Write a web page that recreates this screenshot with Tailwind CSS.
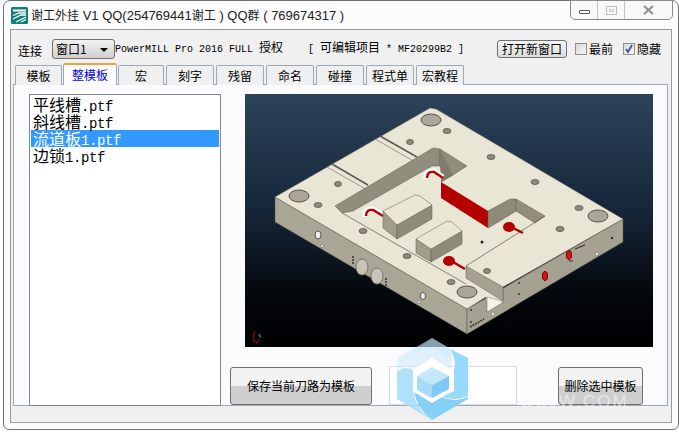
<!DOCTYPE html>
<html>
<head>
<meta charset="UTF-8">
<script src="https://cdn.jsdelivr.net/npm/@tailwindcss/browser@4"></script>
</head>
<body class="bg-white">
<div class="w-[679px] h-[433px] bg-white overflow-hidden relative font-['Noto_Sans_CJK_SC',sans-serif] text-black">
  <!-- window frame -->
  <div class="ml-[3px] w-[676px] h-[430px] bg-[#fbfbfc] border border-[#707070] rounded-t-[7px] rounded-b-[6px] pl-[6px] pr-[5px] flex flex-col relative">
    <!-- title bar -->
    <div class="h-[28px] flex items-center shrink-0">
      <svg class="w-[17px] h-[17px] ml-[1px]" viewBox="0 0 17 17">
        <rect x="0" y="0" width="17" height="17" rx="1.5" fill="#0f8078"/>
        <rect x="2" y="2.5" width="13" height="2" fill="#fff"/>
        <path d="M2 8.5l6-2.5h7M2 12l8-4h5M5 15l10-5M10 15l5-2.5" stroke="#fff" stroke-width="1.3" fill="none"/>
      </svg>
      <span class="ml-[3px] text-[13px] leading-none whitespace-nowrap text-[#222] font-['Liberation_Sans','Noto_Sans_CJK_SC',sans-serif]"><span class="text-[12px]">谢工外挂</span> V1 QQ(254769441<span class="text-[12px]">谢工</span> ) QQ<span class="text-[12px]">群</span> ( 769674317 )</span>
    </div>
    <!-- window buttons -->
    <div class="absolute top-[-1px] right-[5px] w-[103px] h-[20px] bg-[#f8f8f9] border border-[#8a8a8a] rounded-b-[5px] flex">
      <div class="w-[27px] border-r border-[#c4c4c4] flex items-center justify-center">
        <div class="w-[11px] h-[4px] mt-[4px] border border-[#555] bg-white rounded-[1px]"></div>
      </div>
      <div class="w-[27px] border-r border-[#c4c4c4] flex items-center justify-center">
        <div class="w-[11px] h-[9px] border border-[#b9bcc0] flex items-center justify-center"><div class="w-[5px] h-[3px] border border-[#c8cacd]"></div></div>
      </div>
      <div class="flex-1 flex items-center justify-center">
        <svg class="w-[11px] h-[10px]" viewBox="0 0 11 10"><path d="M1 1l9 8M10 1L1 9" stroke="#8d8f92" stroke-width="2.2" fill="none"/></svg>
      </div>
    </div>
    <!-- client area -->
    <div class="w-[662px] h-[394px] bg-[#f0f0f0] border border-[#9a9a9a] border-b-[#a0a0a0] flex flex-col shrink-0">
      <!-- top row -->
      <div class="h-[34px] flex items-center text-[12px] whitespace-nowrap pt-[4px] shrink-0">
        <span class="ml-[7px] w-[34px] mt-[3px]">连接</span>
        <div class="w-[63px] h-[20px] border border-[#707070] rounded-[3px] bg-gradient-to-b from-[#f2f2f2] to-[#cfcfcf] flex items-center pl-[3px] relative">
          窗口1
          <span class="absolute right-[6px] top-[8px] w-0 h-0 border-l-[4px] border-r-[4px] border-t-[4px] border-l-transparent border-r-transparent border-t-black"></span>
        </div>
        <span class="w-[193px] text-[10px] font-['Liberation_Mono','Noto_Sans_CJK_SC',monospace]">PowerMILL Pro 2016 FULL <span class="text-[12px]">授权</span></span>
        <span class="w-[189px] text-[10px] font-['Liberation_Mono','Noto_Sans_CJK_SC',monospace]">[ <span class="text-[12px]">可编辑项目</span> * MF20299B2 ]</span>
        <div class="w-[70px] h-[18px] border border-[#707070] rounded-[3px] bg-gradient-to-b from-[#f5f5f5] to-[#dcdcdc] flex items-center justify-center">打开新窗口</div>
        <div class="ml-[8px] w-[12px] h-[12px] border border-[#8e8f8f] bg-gradient-to-br from-[#d8d8d8] to-[#f8f8f8]"></div>
        <span class="ml-[2px] w-[34px]">最前</span>
        <div class="w-[12px] h-[12px] border border-[#8e8f8f] bg-gradient-to-br from-[#d8d8d8] to-[#f8f8f8] flex items-center justify-center">
          <svg class="w-[10px] h-[10px]" viewBox="0 0 10 10"><path d="M2 5l2 3 4-7" stroke="#3d5a96" stroke-width="1.8" fill="none"/></svg>
        </div>
        <span class="ml-[2px]">隐藏</span>
      </div>
      <!-- tabs -->
      <div class="h-[21px] ml-[4px] flex items-end gap-[2px] text-[12px] shrink-0 relative z-10 -mb-px">
        <div class="w-[47px] h-[20px] bg-[#f0f0f0] border border-[#9caab6] border-b-0 rounded-t-[2px] flex items-center justify-center">模板</div>
        <div class="w-[54px] h-[22px] -mx-px bg-[#fbfbfd] border border-[#9caab6] border-b-0 border-t-2 border-t-[#e8a33d] rounded-t-[2px] flex items-center justify-center text-[#0000e0]">整模板</div>
        <div class="w-[46px] h-[20px] bg-[#f0f0f0] border border-[#9caab6] border-b-0 rounded-t-[2px] flex items-center justify-center">宏</div>
        <div class="w-[48px] h-[20px] bg-[#f0f0f0] border border-[#9caab6] border-b-0 rounded-t-[2px] flex items-center justify-center">刻字</div>
        <div class="w-[48px] h-[20px] bg-[#f0f0f0] border border-[#9caab6] border-b-0 rounded-t-[2px] flex items-center justify-center">残留</div>
        <div class="w-[48px] h-[20px] bg-[#f0f0f0] border border-[#9caab6] border-b-0 rounded-t-[2px] flex items-center justify-center">命名</div>
        <div class="w-[48px] h-[20px] bg-[#f0f0f0] border border-[#9caab6] border-b-0 rounded-t-[2px] flex items-center justify-center">碰撞</div>
        <div class="w-[48px] h-[20px] bg-[#f0f0f0] border border-[#9caab6] border-b-0 rounded-t-[2px] flex items-center justify-center">程式单</div>
        <div class="w-[48px] h-[20px] bg-[#f0f0f0] border border-[#9caab6] border-b-0 rounded-t-[2px] flex items-center justify-center">宏教程</div>
      </div>
      <!-- tab page -->
      <div class="ml-[2px] w-[655px] h-[322px] bg-[#fbfbfd] border border-[#9caab6] flex pt-[9px] pl-[15px] shrink-0">
        <!-- list -->
        <div class="w-[192px] h-[312px] bg-white border border-[#828790] pt-[1px] px-[1px] text-[16px] leading-[17px] shrink-0">
          <div class="h-[17px] pl-[2px]">平线槽<span class="font-['Liberation_Mono',monospace] text-[14px] tracking-[-0.4px]">.ptf</span></div>
          <div class="h-[17px] pl-[2px]">斜线槽<span class="font-['Liberation_Mono',monospace] text-[14px] tracking-[-0.4px]">.ptf</span></div>
          <div class="h-[17px] pl-[2px] bg-[#3399ff] text-white">流道板<span class="font-['Liberation_Mono',monospace] text-[14px] tracking-[-0.4px]">1.ptf</span></div>
          <div class="h-[17px] pl-[2px]">边锁<span class="font-['Liberation_Mono',monospace] text-[14px] tracking-[-0.4px]">1.ptf</span></div>
        </div>
        <!-- preview and buttons -->
        <div class="ml-[8px] w-[424px] flex flex-col">
          <svg class="ml-[16px] w-[408px] h-[253px] shrink-0" viewBox="245 95 408 253">
            <defs>
              <linearGradient id="bg" x1="0" y1="0" x2="0" y2="1">
                <stop offset="0" stop-color="#2d4359"/>
                <stop offset="0.45" stop-color="#16273a"/>
                <stop offset="0.8" stop-color="#04070c"/>
                <stop offset="1" stop-color="#000"/>
              </linearGradient>
            </defs>
            <rect x="245" y="95" width="408" height="253" fill="url(#bg)"/>
            <!-- side faces -->
            <polygon points="275,198 467,310 467,335 275,223" fill="#a9a696" stroke="#55534a" stroke-width="0.5"/>
            <polygon points="467,310 623,220 623,243 467,335" fill="#a5a292" stroke="#55534a" stroke-width="0.5"/>
            <!-- top -->
            <polygon points="275,198 430,109 436,110 623,220 503,288 503,303 487,313 486,298 467,310" fill="#e9e6d6" stroke="#6d6b5e" stroke-width="0.5"/>
            <!-- slots across top -->
            <path d="M327,168 L369,192 M375,140 L417,164" stroke="#8a887a" stroke-width="0.8" fill="none"/>
            <path d="M332,165 L368,186 M380,137 L417,158" stroke="#5c5a50" stroke-width="1.5" fill="none"/>
            <!-- pocket walls -->
            <polygon points="335,207 433,149 440,150 440,167 432,167 353,212 342,214" fill="#918e7e" stroke="#5f5d52" stroke-width="0.5"/>
            <polygon points="440,150 467,167 453,176 440,167" fill="#918e7e" stroke="#5f5d52" stroke-width="0.5"/>
            <polygon points="441,183 488,212 488,229 441,199" fill="#b50000"/>
            <polygon points="488,212 510,200 516,200 516,212 500,222 488,229" fill="#8e8b7b" stroke="#5f5d52" stroke-width="0.5"/>
            <polygon points="516,200 545,217 535,224 516,212" fill="#918e7e" stroke="#5f5d52" stroke-width="0.5"/>
            <polygon points="440,150 440,167 441,183 453,176" fill="#7f7c6e"/>
            <!-- floor lines -->
            <path d="M342,214 L466,285 M453,176 L441,183 M545,217 L466,267" stroke="#5a584e" stroke-width="0.7" fill="none"/>
            <!-- raised front block wall -->
            <polygon points="466,267 503,288 503,302 466,279" fill="#a5a292" stroke="#5a584e" stroke-width="0.5"/>
            <polygon points="487,298 502,302 502,304 487,313" fill="#f5f3e8" stroke="#77756a" stroke-width="0.5"/>
            <!-- red slots -->
            <path d="M365,218 q-1,-9 8,-8 L383,216" stroke="#fff" stroke-width="5" fill="none"/>
            <path d="M366,217 q0,-7 7,-6 L383,217" stroke="#b50000" stroke-width="2.5" fill="none"/>
            <path d="M426,180 q-1,-9 8,-8 L443,178" stroke="#fff" stroke-width="5" fill="none"/>
            <path d="M427,179 q0,-7 7,-6 L443,179" stroke="#b50000" stroke-width="2.5" fill="none"/>
            <ellipse cx="449" cy="262" rx="6" ry="5" fill="#b50000"/><path d="M453,263 L465,270" stroke="#b50000" stroke-width="2.5"/>
            <ellipse cx="509" cy="228" rx="6" ry="5" fill="#b50000"/><path d="M513,229 L523,234" stroke="#b50000" stroke-width="2.5"/>
            <!-- block 1 -->
            <polygon points="383,212 383,229 397,240 397,226" fill="#a09d8d" stroke="#5f5d52" stroke-width="0.5"/>
            <polygon points="397,226 397,240 432,220 432,206" fill="#8e8b7b" stroke="#5f5d52" stroke-width="0.5"/>
            <polygon points="383,212 415,196 420,197 432,206 397,226" fill="#e9e6d6" stroke="#5f5d52" stroke-width="0.5"/>
            <!-- block 2 -->
            <polygon points="416,240 416,254 431,263 431,250" fill="#a09d8d" stroke="#5f5d52" stroke-width="0.5"/>
            <polygon points="431,250 431,263 462,245 462,232" fill="#8e8b7b" stroke="#5f5d52" stroke-width="0.5"/>
            <polygon points="416,240 447,222 452,223 462,232 431,250" fill="#e9e6d6" stroke="#5f5d52" stroke-width="0.5"/>
            <!-- counterbores -->
            <ellipse cx="431" cy="121" rx="10" ry="6" fill="#aaa79a" stroke="#55534a"/>
            <ellipse cx="299" cy="197" rx="10" ry="6" fill="#aaa79a" stroke="#55534a"/>
            <ellipse cx="598" cy="217" rx="10" ry="6" fill="#aaa79a" stroke="#55534a"/>
            <ellipse cx="467" cy="293" rx="10" ry="6" fill="#aaa79a" stroke="#55534a"/>
            <!-- small holes -->
            <g fill="#8e8b7e" stroke="#55534a" stroke-width="0.8">
              <ellipse cx="447" cy="132" rx="4" ry="2.5"/>
              <ellipse cx="410" cy="143" rx="3.5" ry="2.5"/>
              <ellipse cx="338" cy="185" rx="3.5" ry="2.5"/>
              <ellipse cx="318" cy="206" rx="4" ry="2.5"/>
              <ellipse cx="491" cy="158" rx="4" ry="2.5"/>
              <ellipse cx="535" cy="183" rx="4" ry="2.5"/>
              <ellipse cx="579" cy="209" rx="4" ry="2.5"/>
              <ellipse cx="363" cy="232" rx="4" ry="2.5"/>
              <ellipse cx="407" cy="257" rx="4" ry="2.5"/>
              <ellipse cx="451" cy="283" rx="4" ry="2.5"/>
              <ellipse cx="487" cy="272" rx="3.5" ry="2.5"/>
              <ellipse cx="560" cy="230" rx="4" ry="2.5"/>
            </g>
            <circle cx="482" cy="243" r="1.5" fill="#222"/>
            <!-- left side details -->
            <ellipse cx="318" cy="236" rx="3" ry="4" fill="#eee" stroke="#555"/>
            <circle cx="322" cy="247" r="1.5" fill="#eee" stroke="#555" stroke-width="0.5"/>
            <ellipse cx="362" cy="268" rx="6" ry="8" fill="#c8c5b8" stroke="#77756a"/>
            <ellipse cx="377" cy="277" rx="6" ry="8" fill="#c8c5b8" stroke="#77756a"/>
            <path d="M353,257 v8 M386,279 v8" stroke="#333" stroke-width="1.5" stroke-dasharray="2 1"/>
            <ellipse cx="423" cy="297" rx="2.5" ry="3.5" fill="#eee" stroke="#555"/>
            <circle cx="419" cy="303" r="1.5" fill="#eee" stroke="#555" stroke-width="0.5"/>
            <!-- right side details -->
            <ellipse cx="545" cy="277" rx="2.5" ry="4.5" fill="#e01010" stroke="#700"/>
            <ellipse cx="569" cy="256" rx="2.5" ry="4.5" fill="#e01010" stroke="#700"/>
            <path d="M575,250 L585,246 M569,262 h4" stroke="#333" stroke-width="1.2"/>
            <ellipse cx="597" cy="255" rx="1.5" ry="2" fill="#eee" stroke="#555" stroke-width="0.5"/>
            <circle cx="612" cy="239" r="1.2" fill="#333"/>
            <circle cx="519" cy="284" r="1" fill="#333"/>
            <circle cx="519" cy="295" r="1" fill="#333"/>
            <ellipse cx="493" cy="315" rx="1.5" ry="2" fill="#eee" stroke="#555" stroke-width="0.5"/>
            <path d="M470,328 L484,320" stroke="#333" stroke-width="1.5" stroke-dasharray="2 1"/>
            <circle cx="471" cy="311" r="1" fill="#333"/><circle cx="471" cy="323" r="1" fill="#333"/>
            <!-- axis triad -->
            <path d="M255,333 l-2,4 1,5 4,2 M258,341 l3,0" stroke="#e00000" stroke-width="1.2" fill="none" stroke-dasharray="2 1"/>
            <path d="M258,336 l2,0 0,3" stroke="#009aa0" stroke-width="1.2" fill="none"/>
          </svg>
          <div class="mt-[19px] flex items-end h-[39px] text-[12px]">
            <div class="ml-[1px] w-[142px] h-[38px] border border-[#707070] rounded-[3px] bg-gradient-to-b from-[#f2f2f2] from-50% to-[#cfcfcf] to-50% flex items-center justify-center">保存当前刀路为模板</div>
            <div class="ml-[17px] w-[128px] h-[39px] bg-white border border-[#dcdcdc]"></div>
            <div class="ml-[41px] w-[85px] h-[38px] border border-[#707070] rounded-[3px] bg-gradient-to-b from-[#f2f2f2] from-50% to-[#cfcfcf] to-50% flex items-center justify-center">删除选中模板</div>
          </div>
        </div>
      </div>
    </div>
  </div>
  <!-- watermark over the screenshot -->
  <svg class="absolute left-[397px] top-[338px] w-[71px] h-[82px] pointer-events-none" viewBox="0 0 71 82">
    <path d="M0,20 L35,0 L52,10 Q58,22 53,31 L35,20 L17,31 Q8,26 0,33 Z" fill="#cbe9fc" fill-opacity="0.55"/>
    <path d="M35,0 L52,10 Q56,16 55,21 L35,10 L12,16 Z" fill="#bfe6fb" fill-opacity="0.3"/>
    <path d="M53,11 L71,20 L71,58 Q55,64 45,58 L57,52 L57,33 Q60,22 53,11 Z" fill="#8dd6fc" fill-opacity="0.9"/>
    <path d="M17,54 L35,65 L45,59 Q58,65 71,59 L71,61 L35,82 Q20,70 17,54 Z" fill="#7ecdf6" fill-opacity="0.95"/>
    <path d="M0,34 Q8,27 16,32 L16,53 Q19,70 33,81 L0,61 Z" fill="#a9dffb" fill-opacity="0.9"/>
    <polygon points="35,20 57,33 57,53 35,64 17,53 17,31" fill="#fff"/>
    <polygon points="35,29 52,38 35,47 20,38" fill="#c3e7fb"/>
    <polygon points="20,38 35,47 35,60 20,52" fill="#a6dcf9"/>
    <polygon points="52,38 35,47 35,60 52,51" fill="#7fcaf3"/>
  </svg>
  <div class="absolute left-[520px] top-[389px] text-[17px] tracking-[2px] text-white/50 font-['Liberation_Sans',sans-serif] whitespace-nowrap pointer-events-none">OSJW.COM</div>
</div>
</body>
</html>
